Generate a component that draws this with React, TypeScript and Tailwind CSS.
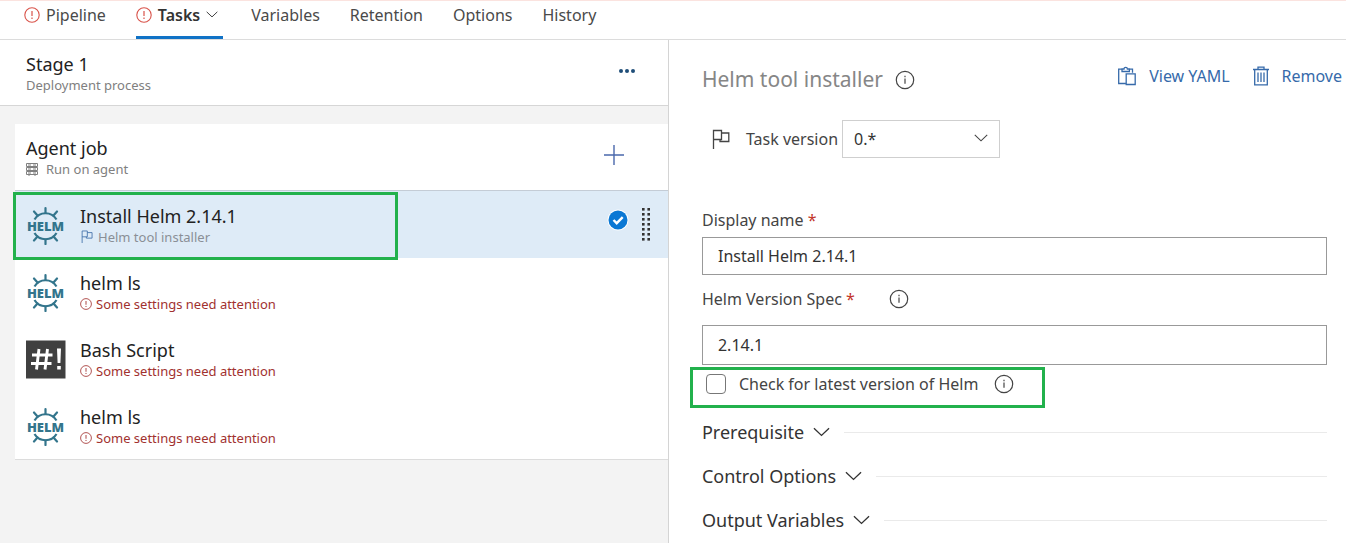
import { useState } from 'react';
import type { ReactNode } from 'react';

function AlertCircle({ className }: { className: string }) {
  return (
    <svg viewBox="0 0 16 16" fill="none" stroke="currentColor" className={className} aria-hidden="true">
      <circle cx="8" cy="8" r="7.2" strokeWidth="1.1" />
      <path d="M8 4v5M8 10.6v1.4" strokeWidth="1.2" />
    </svg>
  );
}

function InfoCircle({ className }: { className: string }) {
  return (
    <svg viewBox="0 0 20 20" fill="none" stroke="currentColor" className={className} aria-hidden="true">
      <circle cx="10" cy="10" r="8.7" strokeWidth="1.2" />
      <path d="M10 8.6v5.2M10 5.8v1.5" strokeWidth="1.2" />
    </svg>
  );
}

function Chevron({ className }: { className: string }) {
  return (
    <svg viewBox="0 0 18 10" fill="none" stroke="currentColor" strokeWidth="1.4" className={className} aria-hidden="true">
      <path d="M1 1l8 7.6L17 1" />
    </svg>
  );
}

function Flag({ className }: { className: string }) {
  return (
    <svg viewBox="0 0 18 20" fill="none" stroke="currentColor" strokeWidth="1.3" className={className} aria-hidden="true">
      <path d="M1.5 20V1.5h8v9h-8M9.5 4h7.3v8.5H8v-2" />
    </svg>
  );
}

function ServerIcon() {
  return (
    <svg viewBox="0 0 12 13" fill="none" stroke="currentColor" className="h-[13px] w-3" aria-hidden="true">
      <path d="M.5 .5h11v3H.5zM.5 4.5h11v3H.5zM.5 8.5h11v3H.5zM2 2h3M7 2h3M2 6h3M7 6h3M2 10h3M7 10h3M3 11.5v1.5M9 11.5v1.5" />
    </svg>
  );
}

function HelmLogo() {
  return (
    <svg viewBox="0 0 40 40" fill="none" stroke="#33758c" className="size-10" role="img" aria-label="Helm">
      <g strokeWidth="2.2">
        <path d="M8.500 14.500a12.800 12.800 0 0 1 22 0M8.500 28a12.800 12.800 0 0 0 22 0" />
        <path d="M19.500 8V3M19.500 34.500v4.500M11.500 10.500L8 6.500M27.500 10.500l3.500-4M11.500 31.500l-3.500 4M27.500 31.500l3.500 4" strokeLinecap="round" />
      </g>
      <text x="19.500" y="25.900" textAnchor="middle" fontFamily="Noto Sans, sans-serif" fontWeight="900" fontSize="13" fill="#33758c" stroke="none">
        HELM
      </text>
    </svg>
  );
}

function BashLogo() {
  return (
    <svg viewBox="0 0 40 40" className="size-10" role="img" aria-label="Bash">
      <path d="M0 1.500h39.500v38H0z" fill="#404040" />
      <path d="M13 10L10.500 30.500M21.500 10L19 30.500M6 16h20.500M5 24.500h20.500" fill="none" stroke="#fff" strokeWidth="2.900" />
      <path d="M31 9.500h4l-.6 14.500h-2.800zM31.200 27h3.600v3.500h-3.600z" fill="#fff" />
    </svg>
  );
}

function ClipboardIcon() {
  return (
    <svg viewBox="0 0 20 20" fill="none" stroke="currentColor" strokeWidth="1.3" className="size-5" aria-hidden="true">
      <path d="M8.500 17.500H1.700V3.200H5M12 3.200h3.500v3.600M5 5.500V3h2a1.700 1.700 0 0 1 3.400 0h2v2.500zM9.200 7.800h9v10.700h-9z" />
    </svg>
  );
}

function TrashIcon() {
  return (
    <svg viewBox="0 0 18 20" fill="none" stroke="currentColor" strokeWidth="1.3" className="h-5 w-[18px]" aria-hidden="true">
      <path d="M1 3.500h16M6 3.500V1.200h6v2.300M2.700 3.500v15.300h12.600V3.500M6 6.500v9.500M9 6.500v9.500M12 6.500v9.500" />
    </svg>
  );
}

function CheckBadge() {
  return (
    <svg viewBox="0 0 22 22" className="size-[22px]" role="img" aria-label="Selected">
      <circle cx="11" cy="11" r="10.500" fill="#fff" />
      <circle cx="11" cy="11" r="9.500" fill="#0b78d4" />
      <path d="M6.500 11l3.200 3.200 6-6" fill="none" stroke="#fff" strokeWidth="2.400" />
    </svg>
  );
}

function DragDots() {
  return (
    <svg viewBox="0 0 10 36" fill="#333" className="h-9 w-[10px]" aria-hidden="true">
      {[0, 5, 10, 15, 20, 25, 30].map((y) => (
        <g key={y}>
          <rect x="1" y={y + 1} width="2.600" height="2.600" />
          <rect x="6.400" y={y + 1} width="2.600" height="2.600" />
        </g>
      ))}
    </svg>
  );
}

type Task = { title: string; logo: 'helm' | 'bash'; note?: string };

const tasks: Task[] = [
  { title: 'Install Helm 2.14.1', logo: 'helm', note: 'Helm tool installer' },
  { title: 'helm ls', logo: 'helm' },
  { title: 'Bash Script', logo: 'bash' },
  { title: 'helm ls', logo: 'helm' },
];

function TaskRow({ task, selected }: { task: Task; selected: boolean }) {
  return (
    <li className={selected ? 'relative flex h-[67px] items-center bg-[#deebf7] pl-[11px] pr-4' : 'flex h-[67px] items-center pl-[11px] pr-4'}>
      {task.logo === 'helm' ? <HelmLogo /> : <BashLogo />}
      <div className="ml-[14px] flex-1">
        <div className="text-lg leading-6 text-[#222]">{task.title}</div>
        {task.note ? (
          <div className="flex items-center gap-1 text-[13px] leading-[18px] text-[#8a8f96]">
            <Flag className="h-[13px] w-[14px] text-[#3f6ea8]" />
            {task.note}
          </div>
        ) : (
          <div className="flex items-center gap-1 text-[13px] leading-[18px] text-[#a1312f]">
            <AlertCircle className="size-3" />
            Some settings need attention
          </div>
        )}
      </div>
      {selected && (
        <>
          <div className="mb-2.5">
            <CheckBadge />
          </div>
          <button type="button" aria-label="Reorder task" className="ml-3 mr-px">
            <DragDots />
          </button>
          <div className="pointer-events-none absolute -left-0.5 -bottom-0.5 top-px w-[385px] border-3 border-[#22b14c]" />
        </>
      )}
    </li>
  );
}

function Tab({ children, active }: { children: ReactNode; active?: boolean }) {
  return (
    <a
      href="#"
      className={
        active
          ? 'flex h-full items-center gap-1.5 border-b-3 border-[#1072c6] pb-2 pr-[5px] font-semibold text-[#333]'
          : 'flex h-full items-center gap-1.5 pb-[11px] text-[#4a4a4a]'
      }
    >
      {children}
    </a>
  );
}

function Section({ title }: { title: string }) {
  return (
    <div className="flex h-11 items-center">
      <button type="button" className="flex items-center gap-[9px] text-lg text-[#333]">
        {title}
        <Chevron className="h-[10px] w-[17px]" />
      </button>
      <div className="ml-[14px] h-px flex-1 bg-[#eaeaea]" />
    </div>
  );
}

export default function App() {
  const [name, setName] = useState('Install Helm 2.14.1');
  const [spec, setSpec] = useState('2.14.1');
  const [latest, setLatest] = useState(false);

  return (
    <div className="flex min-h-screen flex-col bg-white font-['Noto_Sans','Open_Sans',sans-serif]">
      <nav className="flex h-10 border-b border-t border-b-[#dcdcdc] border-t-[#fbe3df] pl-6 text-base">
        <Tab>
          <AlertCircle className="size-4 text-[#d9534a]" />
          Pipeline
        </Tab>
        <div className="w-[30px]" />
        <Tab active>
          <AlertCircle className="size-4 text-[#d9534a]" />
          Tasks
          <Chevron className="h-[7px] w-3" />
        </Tab>
        <div className="ml-7 flex gap-[30px]">
          <Tab>Variables</Tab>
          <Tab>Retention</Tab>
          <Tab>Options</Tab>
          <Tab>History</Tab>
        </div>
      </nav>

      <div className="flex flex-1">
        <aside className="w-[49.7%] border-r border-[#d4d4d4] bg-[#f3f3f3]">
          <header className="flex h-[66px] items-center justify-between border-b border-[#d6d6d6] bg-white pl-[26px] pr-8">
            <div>
              <h1 className="text-lg leading-6 text-[#222]">Stage 1</h1>
              <p className="text-[13px] leading-[18px] text-[#808080]">Deployment process</p>
            </div>
            <button type="button" aria-label="More actions" className="mb-1">
              <svg viewBox="0 0 18 6" fill="#1f4e79" className="h-1.5 w-[18px]">
                <circle cx="3" cy="3" r="2" />
                <circle cx="9" cy="3" r="2" />
                <circle cx="15" cy="3" r="2" />
              </svg>
            </button>
          </header>

          <section className="ml-[15px] mt-[18px] border-b border-[#dcdcdc] bg-white">
            <div className="flex h-[67px] items-center justify-between border-b border-[#c4ccd6] pl-[11px] pr-11">
              <div>
                <h2 className="text-lg leading-6 text-[#222]">Agent job</h2>
                <p className="flex items-center gap-2 text-[13px] leading-[18px] text-[#808080]">
                  <ServerIcon />
                  Run on agent
                </p>
              </div>
              <button type="button" aria-label="Add a task" className="mt-[-5px]">
                <svg viewBox="0 0 20 20" stroke="#4a68ac" strokeWidth="1.400" className="size-5">
                  <path d="M10 0v20M0 10h20" />
                </svg>
              </button>
            </div>
            <ul>
              {tasks.map((task, i) => (
                <TaskRow key={i} task={task} selected={i === 0} />
              ))}
            </ul>
          </section>
        </aside>

        <main className="flex-1 pl-[33px] pt-[22px]">
          <div className="flex items-center justify-between pr-1">
            <h2 className="flex h-9 items-center gap-3 text-[21px] text-[#868686]">
              Helm tool installer
              <InfoCircle className="size-5 text-[#444]" />
            </h2>
            <div className="mb-2 flex items-center gap-[22px] text-base text-[#366aaa]">
              <button type="button" className="flex items-center gap-3">
                <ClipboardIcon />
                View YAML
              </button>
              <button type="button" className="flex items-center gap-3">
                <TrashIcon />
                Remove
              </button>
            </div>
          </div>

          <div className="pr-[19px] text-base text-[#444]">
            <div className="mt-[22px] flex items-center pl-[10px]">
              <Flag className="h-5 w-[18px]" />
              <label htmlFor="version" className="ml-4">
                Task version
              </label>
              <div className="relative ml-1 w-[158px]">
                <select id="version" className="h-[38px] w-full appearance-none border border-[#cfcfcf] bg-white pl-[11px] text-[#333]">
                  <option>0.*</option>
                </select>
                <Chevron className="pointer-events-none absolute right-3 top-[14px] h-2 w-[14px]" />
              </div>
            </div>

            <label htmlFor="name" className="mt-[50px] block leading-6">
              Display name <span className="text-[#c3362b]">*</span>
            </label>
            <input
              id="name"
              value={name}
              onChange={(e) => setName(e.target.value)}
              className="mt-[5px] block h-[38px] w-full border border-[#999] px-[15px] text-[#333]"
            />

            <div className="mt-3 flex items-center leading-6">
              <label htmlFor="spec">
                Helm Version Spec <span className="text-[#c3362b]">*</span>
              </label>
              <InfoCircle className="ml-[34px] size-5" />
            </div>
            <input
              id="spec"
              value={spec}
              onChange={(e) => setSpec(e.target.value)}
              className="mt-[14px] block h-10 w-full border border-[#999] px-[15px] text-[#333]"
            />

            <div className="-ml-3 mt-0.5 flex h-[41px] w-[355px] items-center border-3 border-[#22b14c] pb-[7px] pl-[13px]">
              <input
                id="latest"
                type="checkbox"
                checked={latest}
                onChange={(e) => setLatest(e.target.checked)}
                className="size-5 appearance-none rounded border border-[#777] bg-white checked:bg-[#0b78d4]"
              />
              <label htmlFor="latest" className="ml-[13px]">
                Check for latest version of Helm
              </label>
              <InfoCircle className="ml-4 size-5" />
            </div>

            <div className="mt-0.5">
              <Section title="Prerequisite" />
              <Section title="Control Options" />
              <Section title="Output Variables" />
            </div>
          </div>
        </main>
      </div>
    </div>
  );
}
